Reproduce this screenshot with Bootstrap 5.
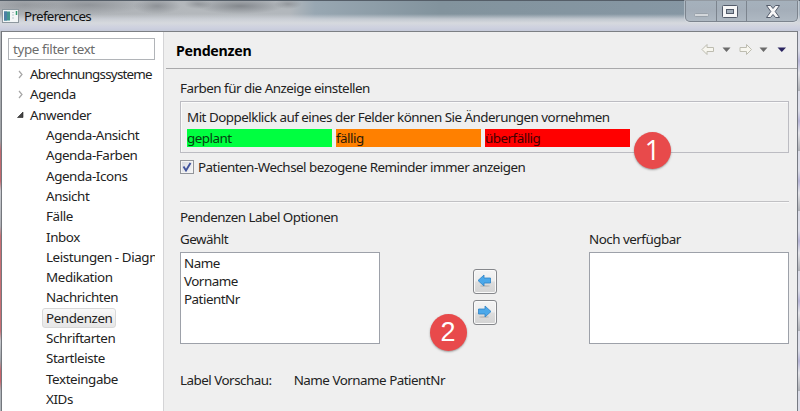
<!DOCTYPE html>
<html lang="de">
<head>
<meta charset="utf-8">
<title>Preferences</title>
<link href="https://cdn.jsdelivr.net/npm/bootstrap@5.3.0/dist/css/bootstrap.min.css" rel="stylesheet">
<style>
body{width:800px;height:411px;overflow:hidden;font-family:"Noto Sans","Open Sans",sans-serif;font-size:13.4px;line-height:18px;letter-spacing:-.5px;color:#222;background:#efefef}
.titlebar{height:31px;border-top:1px solid #555e68;padding-left:2px;background:
 radial-gradient(ellipse 34px 8px at 25px 4px,#6c6f7455,#6c6f7400),
 radial-gradient(ellipse 56px 9px at 88px 4px,#5f636960,#5f636900),
 radial-gradient(ellipse 24px 8px at 157px 5px,#5f636970,#5f636900),
 radial-gradient(ellipse 14px 5px at 198px 3px,#5f636960,#5f636900),
 radial-gradient(ellipse 44px 8px at 240px 5px,#5a5e6488,#5a5e6400),
 radial-gradient(ellipse 14px 5px at 288px 3px,#5f636960,#5f636900),
 linear-gradient(#0000 13px,#d0d4dbcc 18px,#d6d9de 22px,#cdd0df 27px,#c5cad9),
 linear-gradient(90deg,#a9adb2 0,#b4b8bc 190px,#b2b7bc 290px,#98a7b2 315px,#82939d 440px,#8697a4 700px,#a5b2be)}
.titletext{color:#111;letter-spacing:-.68px}
.titletext span{margin-left:5px}
.winbtns{height:21px;border:1px solid #7c848e;border-top:0;border-radius:0 0 5px 5px;width:113px;margin-right:2px;box-shadow:0 0 0 1px #e4e8ec70;background:linear-gradient(#a5b1bc,#a4aeb9 45%,#aeb8c2)}
.winbtns>span+span{border-left:1px solid #7c848e}
.w-min{width:30px}.w-max{width:30px}.w-close{width:51px}
.edge-l{width:2px;border-right:1px solid #73777d;background:linear-gradient(#b6b9bd 0,#9da0a4 110px,#c06a70 120px,#c2686e 150px,#c9cbd0 160px,#aeb0b5 195px,#c86e74 205px,#c86e74 300px,#c5c8cc 310px,#a0a3a8 330px,#c8646b 340px,#c8646b 350px,#aeb3b8 360px)}
.edge-r{width:3px;border-left:1px solid #777b83;background:repeating-linear-gradient(#dcdde8 0,#dcdde8 20px,#b7b5d6 30px,#e3e3e8 42px,#aeb0b6 60px)}
.client{border-top:1px solid #7c7f84;height:380px}
.sidebar{width:161px;background:#fff;padding:6px 0 0 6px}
.sash{width:3px;border-left:1px solid #d4d4d6;background:#efefef}
.filterbox{width:147px;height:22px;border:1px solid #b1b4b8;color:#6c6c6c;padding:1px 4px;letter-spacing:-.38px}
.tree{padding-top:4px;width:147px;letter-spacing:-.41px}
.node{height:20.32px;line-height:20.32px;white-space:nowrap;overflow:hidden}
.node svg{width:9px;height:9px;margin-left:8px;margin-right:5px;flex:none}
.tight{letter-spacing:-.78px}
.leaf{padding-left:38px}
.chosen{margin-left:34px;padding:0 3px;border:1px solid #d9d9d9;border-radius:3px;background:linear-gradient(#f9f9f9,#e6e6e6);line-height:18px}
.head{height:37px;border-bottom:1px solid #a9a9ab;padding:2px 10px 0 10px}
.head h1{font-size:14.2px;letter-spacing:-.28px;color:#000}
.head svg{margin-top:-3px}
.content{padding:10px 8px 0 14px}
.groupbox{height:52px;border:1px solid #bcbcc2;margin-top:4px;padding:6px 6px 0;box-shadow:inset 1px 1px #fafafa}
.flds{margin-top:3px;gap:4px}
.fld{width:145px;height:18px;color:#2a1a08;line-height:19px}
.f-g{background:#00ff40;color:#063d10}.f-o{background:#ff8000}.f-r{background:#f00;color:#400}
.chkrow{margin-top:5px}
.chk{width:14px;height:14px;border:1px solid #92959b;background:linear-gradient(135deg,#d4d8df,#f7f7f8);box-shadow:inset 0 0 0 1px #f4f4f4}
.rule{height:2px;background:#c1c1c4;border-bottom:1px solid #f9f9f9;margin-top:25px}
.optlabel{margin-top:5px}
.lst{width:200px;height:92px;border:1px solid #9da1a9;background:#fff;padding:1px 3px}
.movers{padding-top:19px;gap:6px}
.arrowbtn{width:24px;height:25px;border:1px solid #85878b;border-radius:3px;background:linear-gradient(#f4f4f4,#ededed 48%,#dedede 52%,#d3d3d3);box-shadow:inset 0 0 0 1px #fafafa}
.preview{margin-top:27px;gap:22px}
.callout{position:absolute;width:37px;height:37px;border-radius:50%;background:#e84a4b;color:#fff;font:27px/36px "Open Sans",sans-serif;text-align:center;letter-spacing:0;box-shadow:0 1px 2px #5558}
.c-one{left:634px;top:132px}.c-two{left:429.5px;top:314px;font-family:"Liberation Sans",sans-serif}
</style>
<script src="https://cdn.jsdelivr.net/npm/bootstrap@5.3.0/dist/js/bootstrap.bundle.min.js"></script>
</head>
<body>
<header class="titlebar d-flex justify-content-between">
  <div class="d-flex align-items-center titletext">
    <svg width="17" height="14" viewBox="0 0 17 14"><rect x=".5" y=".5" width="16" height="13" fill="#f3f6f7" stroke="#8d979e"/><rect x="2" y="2.5" width="6" height="9" fill="#43958f"/><rect x="2" y="2.5" width="3" height="9" fill="#4c7fa5"/><path d="M10 3.500h2M10 6h2M10 9h2" stroke="#b9c6cc"/><path d="M14.500 2v4" stroke="#2f9b6c" stroke-width="1.500"/></svg>
    <span>Preferences</span>
  </div>
  <div class="winbtns d-flex">
    <span class="w-min"><svg width="30" height="20"><rect x="8.500" y="12.500" width="14" height="3" rx="1" fill="#d3d7db" stroke="#98a1aa"/></svg></span>
    <span class="w-max"><svg width="28" height="20"><rect x="5.500" y="4.500" width="15" height="12" rx="1" fill="#f7f7f8" stroke="#535b6a"/><rect x="9.500" y="8.500" width="7" height="4" fill="#a2adb9" stroke="#535b6a"/></svg></span>
    <span class="w-close"><svg width="50" height="20"><path d="M19.500 4.500h4l2.500 3 2.500-3h4l-4.300 6 4.300 6h-4l-2.500-3-2.500 3h-4l4.300-6z" fill="#f7f7f8" stroke="#535b6a"/></svg></span>
  </div>
</header>
<div class="d-flex">
  <div class="edge-l"></div>
  <div class="client d-flex flex-grow-1">
    <aside class="sidebar flex-shrink-0">
      <div class="filterbox">type filter text</div>
      <div class="tree">
        <div class="node tight d-flex align-items-center"><svg viewBox="0 0 9 9"><path d="M3 1l3 3.500L3 8" fill="none" stroke="#a6a6a6" stroke-width="1.200"/></svg>Abrechnungssysteme</div>
        <div class="node d-flex align-items-center"><svg viewBox="0 0 9 9"><path d="M3 1l3 3.500L3 8" fill="none" stroke="#a6a6a6" stroke-width="1.200"/></svg>Agenda</div>
        <div class="node d-flex align-items-center"><svg viewBox="0 0 9 9"><path d="M7 2V7.500H1.500z" fill="#444" stroke="#222" stroke-width=".6"/></svg>Anwender</div>
        <div class="node leaf">Agenda-Ansicht</div>
        <div class="node leaf">Agenda-Farben</div>
        <div class="node leaf">Agenda-Icons</div>
        <div class="node leaf">Ansicht</div>
        <div class="node leaf">Fälle</div>
        <div class="node leaf">Inbox</div>
        <div class="node leaf">Leistungen - Diagn</div>
        <div class="node leaf">Medikation</div>
        <div class="node leaf">Nachrichten</div>
        <div class="node d-flex"><span class="chosen">Pendenzen</span></div>
        <div class="node leaf">Schriftarten</div>
        <div class="node leaf">Startleiste</div>
        <div class="node leaf">Texteingabe</div>
        <div class="node leaf">XIDs</div>
      </div>
    </aside>
    <div class="sash flex-shrink-0"></div>
    <main class="flex-grow-1">
      <div class="head d-flex align-items-center justify-content-between">
        <h1 class="fw-bold m-0">Pendenzen</h1>
        <svg width="86" height="14" viewBox="0 0 86 14"><g fill="#f7f6ef" stroke="#bdbcb0"><path d="M1 6.500l5-5v3h6.500v4H6v3z"/><path d="M50.500 6.500l-5-5v3H39v4h6.500v3z"/></g><g fill="#6b6b6b"><path d="M21.500 4.500h8l-4 4.500zM58.500 4.500h8l-4 4.500z"/><path d="M76.500 4.500h8.500L80.800 9z" fill="#2b2560"/></g></svg>
      </div>
      <div class="content">
        <div>Farben für die Anzeige einstellen</div>
        <section class="groupbox">
          <div>Mit Doppelklick auf eines der Felder können Sie Änderungen vornehmen</div>
          <div class="flds d-flex">
            <div class="fld f-g">geplant</div><div class="fld f-o">fällig</div><div class="fld f-r">überfällig</div>
          </div>
        </section>
        <div class="chkrow d-flex align-items-center">
          <span class="chk d-flex me-1"><svg width="12" height="12" viewBox="0 0 12 12"><path d="M2.500 5.500l2.500 4L9.500 2" fill="none" stroke="#40539c" stroke-width="1.900"/></svg></span>
          <span>Patienten-Wechsel bezogene Reminder immer anzeigen</span>
        </div>
        <div class="rule"></div>
        <div class="optlabel">Pendenzen Label Optionen</div>
        <div class="d-flex justify-content-between mt-1">
          <div>
            <div class="mb-1">Gewählt</div>
            <div class="lst"><div>Name</div><div>Vorname</div><div>PatientNr</div></div>
          </div>
          <div class="movers d-flex flex-column justify-content-center">
            <div class="arrowbtn d-flex align-items-center justify-content-center"><svg width="15" height="14" viewBox="0 0 15 14"><ellipse cx="8" cy="12" rx="5" ry="1" fill="#aaa8"/><path d="M1 6.500l6-5.500v3h6.500v5H7v3z" fill="#4ba8ea" stroke="#2f83c5" stroke-width=".8"/></svg></div>
            <div class="arrowbtn d-flex align-items-center justify-content-center"><svg width="15" height="14" viewBox="0 0 15 14"><ellipse cx="7" cy="12" rx="5" ry="1" fill="#aaa8"/><path d="M14 6.500l-6-5.500v3H1.500v5H8v3z" fill="#4ba8ea" stroke="#2f83c5" stroke-width=".8"/></svg></div>
          </div>
          <div>
            <div class="mb-1">Noch verfügbar</div>
            <div class="lst"></div>
          </div>
        </div>
        <div class="preview d-flex"><span>Label Vorschau:</span><span>Name Vorname PatientNr</span></div>
      </div>
    </main>
  </div>
  <div class="edge-r"></div>
</div>
<div class="callout c-one">1</div>
<div class="callout c-two">2</div>
</body>
</html>
